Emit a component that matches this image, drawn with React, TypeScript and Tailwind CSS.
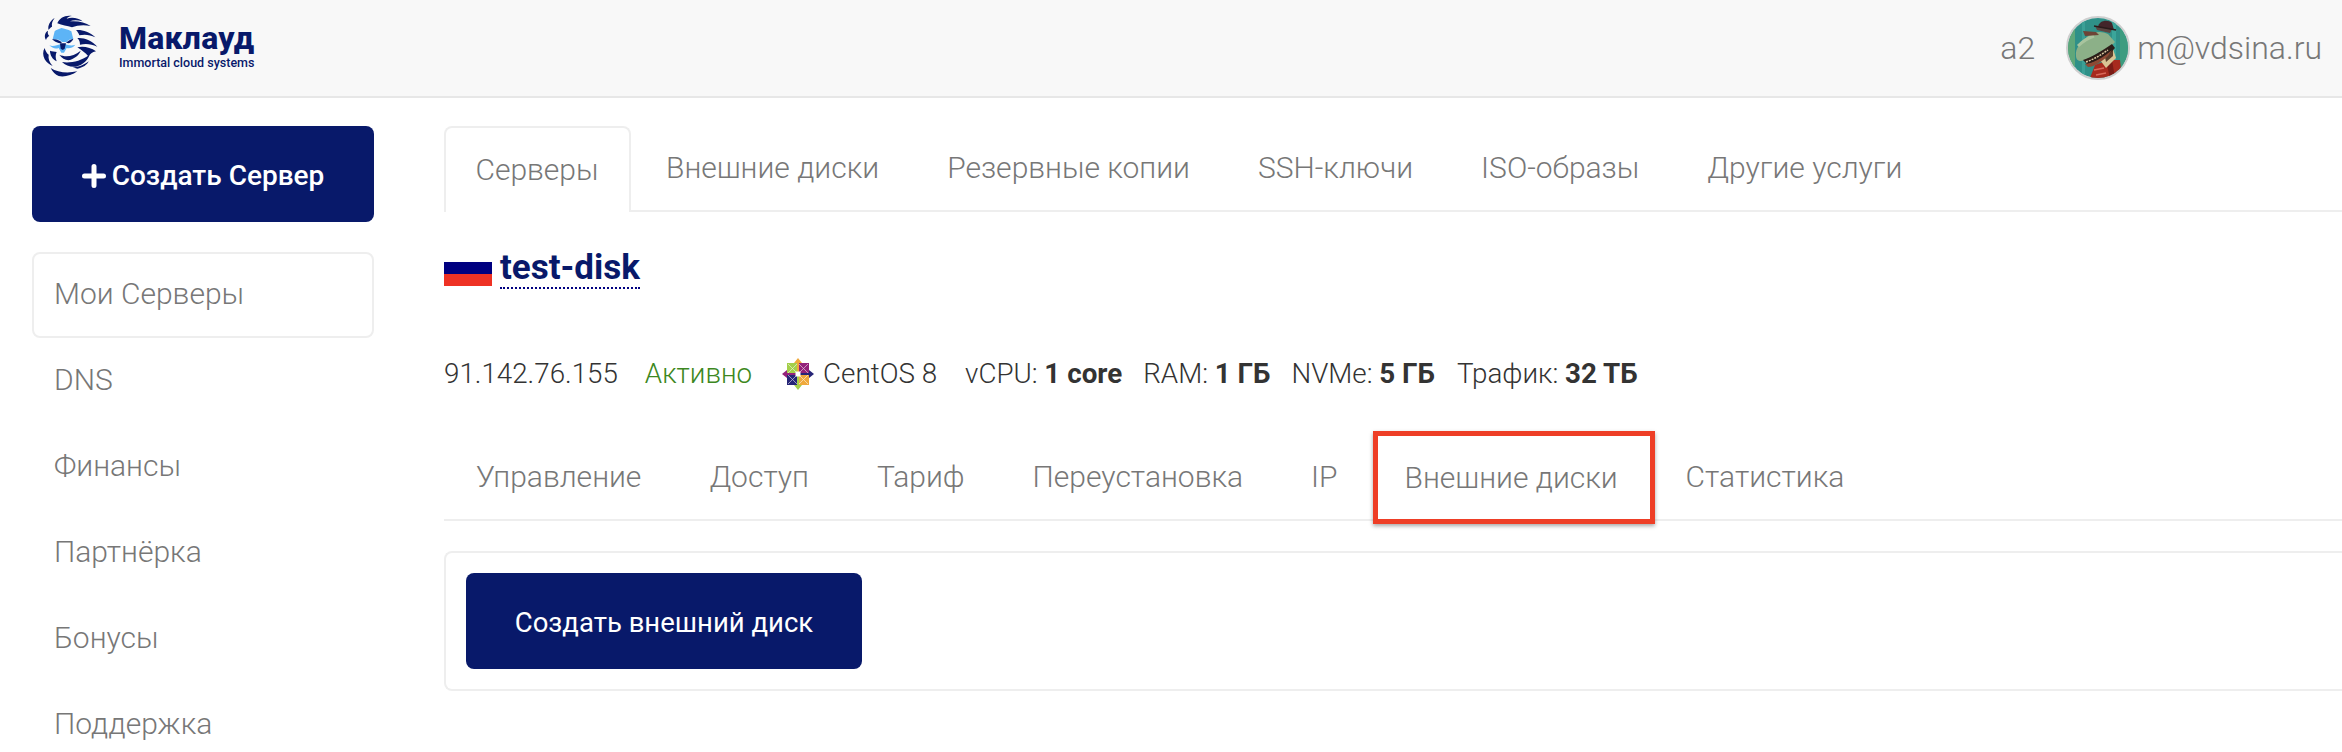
import React from "react";

const font = { fontFamily: '"Roboto", "Liberation Sans", sans-serif' };

function Logo() {
  return (
    <svg width="62" height="66" viewBox="0 0 186 198" className="shrink-0 -mt-[6px]">
      <g fill="#08196a">
        <path d="M52 34C58 18 76 8 96 12C88 13 82 16 80 20C96 14 116 18 128 28C112 24 100 24 90 28C112 26 136 30 152 42C130 38 112 40 96 46C82 42 66 40 52 34Z" />
        <path d="M44 18C38 26 34 34 36 44C32 46 28 50 26 54C22 42 30 26 44 18Z" />
        <path d="M24 56C22 62 24 68 28 72C24 74 20 78 18 84C12 74 14 62 24 56Z" />
        <path d="M108 54C124 52 148 58 166 76C150 68 134 66 118 70C116 64 112 58 108 54Z" />
        <path d="M112 78C132 76 156 86 172 104C154 96 138 94 120 98C120 90 118 84 112 78Z" />
        <path d="M112 106C130 102 152 106 168 118C156 120 150 126 146 134C136 122 124 114 112 106Z" />
        <path d="M14 108C8 118 8 130 14 142C20 152 28 158 38 162C28 150 24 140 26 128C20 124 16 116 14 108Z" />
        <path d="M30 116C30 130 38 142 50 148C46 138 46 128 50 120C44 118 36 118 30 116Z" />
        <path d="M58 128C76 136 100 134 122 116C118 128 106 138 90 144C78 146 66 140 58 128Z" />
        <path d="M66 150C90 154 122 148 148 128C146 142 130 158 108 164C92 166 76 160 66 150Z" />
        <path d="M32 168C52 182 84 184 112 178C96 190 72 196 56 192C46 188 38 180 32 168Z" />
        <path d="M98 166C116 166 134 158 146 148C142 158 128 168 112 170Z" />
      </g>
      <g fill="#5db4f6">
        <path d="M44 58C48 52 58 52 64 48C72 50 84 52 94 58L100 82C90 82 84 84 80 90L66 90C62 84 52 82 38 82Z" />
        <path d="M28 100C38 104 52 100 62 96L68 114L74 96C84 100 96 102 106 98C98 108 88 110 80 108L72 122H64L56 108C46 112 36 108 28 100Z" />
      </g>
      <g fill="#08196a">
        <path d="M36 82C46 80 60 84 66 92L58 94C50 92 42 88 36 82Z" />
        <path d="M100 80C92 82 84 86 78 92L86 94C92 92 98 86 100 80Z" />
        <path d="M60 94H78L74 110L68 114L62 110Z" />
      </g>
    </svg>
  );
}

function Avatar() {
  return (
    <div className="w-[64px] h-[64px] rounded-full border-2 border-[#cfcfcf] overflow-hidden shrink-0">
      <svg width="60" height="60" viewBox="0 0 60 60">
        <rect width="60" height="60" fill="#2f9088" />
        <rect x="0" width="7" height="60" fill="#5fa77a" />
        <rect x="52" width="8" height="60" fill="#3d9c80" />
        <rect x="14" width="3" height="60" fill="#3ba096" />
        <rect x="44" width="4" height="60" fill="#3ba59a" />
        <path d="M22 60L27 47L40 42L52 42L54 60Z" fill="#a72a1e" />
        <path d="M38 43L42 60L47 60L44 42Z" fill="#7a1c16" />
        <path d="M26 52L36 50M28 57L38 55" stroke="#d8695a" strokeWidth="1.5" />
        <path d="M32 32L44 28L48 40L38 50L32 42Z" fill="#d8c494" />
        <path d="M36 34L45 31L45 38L38 44Z" fill="#5a3d2a" />
        <path d="M8 38C7 30 13 24 20 18C26 13 34 13 40 16L47 24C44 28 36 32 30 35C24 39 18 42 13 43C10 43 8 41 8 38Z" fill="#8cb088" />
        <path d="M10 28C14 24 20 20 26 18" stroke="#a8c49e" strokeWidth="3" fill="none" />
        <path d="M15 42C24 39 34 33 44 26L47 30C40 38 28 45 19 46Z" fill="#2c1d18" />
        <path d="M17 46C26 45 36 39 44 32L40 38C33 44 26 49 20 49Z" fill="#8d4a34" />
        <path d="M18 44C26 41 33 37 40 32" stroke="#d9c7a0" strokeWidth="1.5" fill="none" strokeDasharray="2 1" />
        <path d="M15 13L28 14L31 17L17 18Z" fill="#6d4436" />
        <path d="M27 8L44 11L42 15L29 12Z" fill="#5b4440" />
        <path d="M30 9C31 2 40 1 44 5L46 12Z" fill="#43252a" />
        <path d="M26 8L48 12" stroke="#2a1b1b" strokeWidth="1.5" />
      </svg>
    </div>
  );
}

function CentOS() {
  return (
    <svg width="32" height="32" viewBox="0 0 32 32" className="shrink-0 mr-[9px]">
      <rect x="5" y="5" width="10" height="10" fill="#a4cf4a" />
      <rect x="17" y="5" width="10" height="10" fill="#932279" />
      <rect x="5" y="17" width="10" height="10" fill="#262577" />
      <rect x="17" y="17" width="10" height="10" fill="#efa93c" />
      <path d="M16 0L20 5L17 5L17 15L15 15L15 5L12 5Z" fill="#efa93c" />
      <path d="M32 16L27 20L27 17L17 17L17 15L27 15L27 12Z" fill="#262577" />
      <path d="M16 32L12 27L15 27L15 17L17 17L17 27L20 27Z" fill="#a4cf4a" />
      <path d="M0 16L5 12L5 15L15 15L15 17L5 17L5 20Z" fill="#932279" />
      <rect x="13.5" y="13.5" width="5" height="5" fill="#fff" />
      <path d="M6 6L15 15M26 6L17 15M6 26L15 17M26 26L17 17M6 15L15 6M26 15L17 6M6 17L15 26M26 17L17 26" stroke="#fff" strokeWidth=".7" opacity=".75" />
    </svg>
  );
}

const side = ["DNS", "Финансы", "Партнёрка", "Бонусы", "Поддержка"];
const topTabs = ["Внешние диски", "Резервные копии", "SSH-ключи", "ISO-образы", "Другие услуги"];
const subTabs = ["Управление", "Доступ", "Тариф", "Переустановка", "IP"];

export default function App() {
  return (
    <div className="w-[2342px] h-[752px] overflow-hidden bg-white text-[27.75px] font-light" style={font}>
      <header className="h-[98px] bg-[#f8f8f8] border-b-2 border-[#e7e7e7] flex items-center justify-between pl-[40px] pr-[20px]">
        <div className="flex items-center">
          <Logo />
          <div className="ml-[17px] text-[#08196a]">
            <div className="text-[32px] leading-[32px] font-extrabold tracking-[0.2px] mt-[-3px]">Маклауд</div>
            <div className="text-[12.5px] leading-[16px] font-medium mt-[1px]">Immortal cloud systems</div>
          </div>
        </div>
        <div className="flex items-center text-[#777777] text-[32px] font-light">
          <span className="mr-[31px]">a2</span>
          <Avatar />
          <span className="ml-[7px]">m@vdsina.ru</span>
        </div>
      </header>

      <div className="flex pt-[28px]">
        <aside className="w-[342px] ml-[32px] shrink-0 flex flex-col text-[30px]">
          <div className="h-[96px] pt-[3px] bg-[#08196a] rounded-[8px] text-white font-medium text-[28px] flex items-center justify-center">
            <svg width="24" height="24" viewBox="0 0 24 24" className="mr-[6px] shrink-0">
              <path d="M12 2.5V21.5M2.5 12H21.5" stroke="#fff" strokeWidth="5" strokeLinecap="round" />
            </svg>
            Создать Сервер
          </div>
          <div className="h-[86px] mt-[30px] pb-[3px] border-2 border-[#eeeeee] rounded-[8px] flex items-center pl-[20px] text-[#777777]">
            Мои Серверы
          </div>
          {side.map((s) => (
            <div key={s} className="h-[86px] pb-[4px] flex items-center pl-[22px] text-[#777777]">
              {s}
            </div>
          ))}
        </aside>

        <main className="flex-1 ml-[70px] flex flex-col">
          <nav className="h-[86px] flex gap-[4px] border-b-2 border-[#eeeeee] text-[#777777] text-[30px]">
            <div className="h-[86px] w-[187px] -mr-[1px] pb-[2px] pr-[1px] border-2 border-b-0 border-[#eeeeee] rounded-t-[8px] bg-white flex items-center justify-center">
              Серверы
            </div>
            {topTabs.map((t) => (
              <div key={t} className="h-[84px] pb-[2px] px-[32px] flex items-center whitespace-nowrap">
                {t}
              </div>
            ))}
          </nav>

          <div className="flex items-start h-[44px] mt-[34px]">
            <div className="w-[48px] h-[24px] mt-[16px] mr-[8px] flex flex-col">
              <div className="h-[12px] bg-[#000080]" />
              <div className="h-[12px] bg-[#ee3224]" />
            </div>
            <span className="mt-[3px] text-[35px] leading-[38px] font-bold text-[#08196a] border-b-2 border-dotted border-[#000080]">
              test-disk
            </span>
          </div>

          <div className="flex items-center mt-[68px] h-[32px] text-[#333333] whitespace-nowrap">
            <span className="mr-[27px]">91.142.76.155</span>
            <span className="mr-[30px] text-[#3c8721]">Активно</span>
            <CentOS />
            <span className="mr-[28px]">CentOS 8</span>
            <span className="mr-[21px]">vCPU: <b className="font-bold">1 core</b></span>
            <span className="mr-[21px]">RAM: <b className="font-bold">1 ГБ</b></span>
            <span className="mr-[22px]">NVMe: <b className="font-bold">5 ГБ</b></span>
            <span>Трафик: <b className="font-bold">32 ТБ</b></span>
          </div>

          <nav className="h-[86px] mt-[45px] flex gap-[4px] border-b-2 border-[#eeeeee] text-[#777777] text-[30px] -mr-[20px]">
            {subTabs.map((t) => (
              <div key={t} className="h-[84px] pb-[1px] px-[32px] flex items-center whitespace-nowrap">
                {t}
              </div>
            ))}
            <div className="relative h-[93px] w-[282px] -ml-[1px] -mt-[4px] border-[5px] border-[#ee3e26] shadow-[0_2px_4px_rgba(0,0,0,0.35)] bg-white z-10 flex items-center pl-[27px] whitespace-nowrap">
              Внешние диски
            </div>
            <div className="h-[84px] pb-[1px] pl-[27px] flex items-center whitespace-nowrap">Статистика</div>
          </nav>

          <section className="mt-[30px] h-[140px] border-2 border-r-0 border-[#eeeeee] rounded-l-[8px] -mr-[20px] pl-[20px] pt-[20px]">
            <div className="w-[396px] h-[96px] pt-[3px] bg-[#08196a] rounded-[8px] text-white font-normal text-[27.5px] flex items-center justify-center">
              Создать внешний диск
            </div>
          </section>
        </main>
      </div>
    </div>
  );
}
